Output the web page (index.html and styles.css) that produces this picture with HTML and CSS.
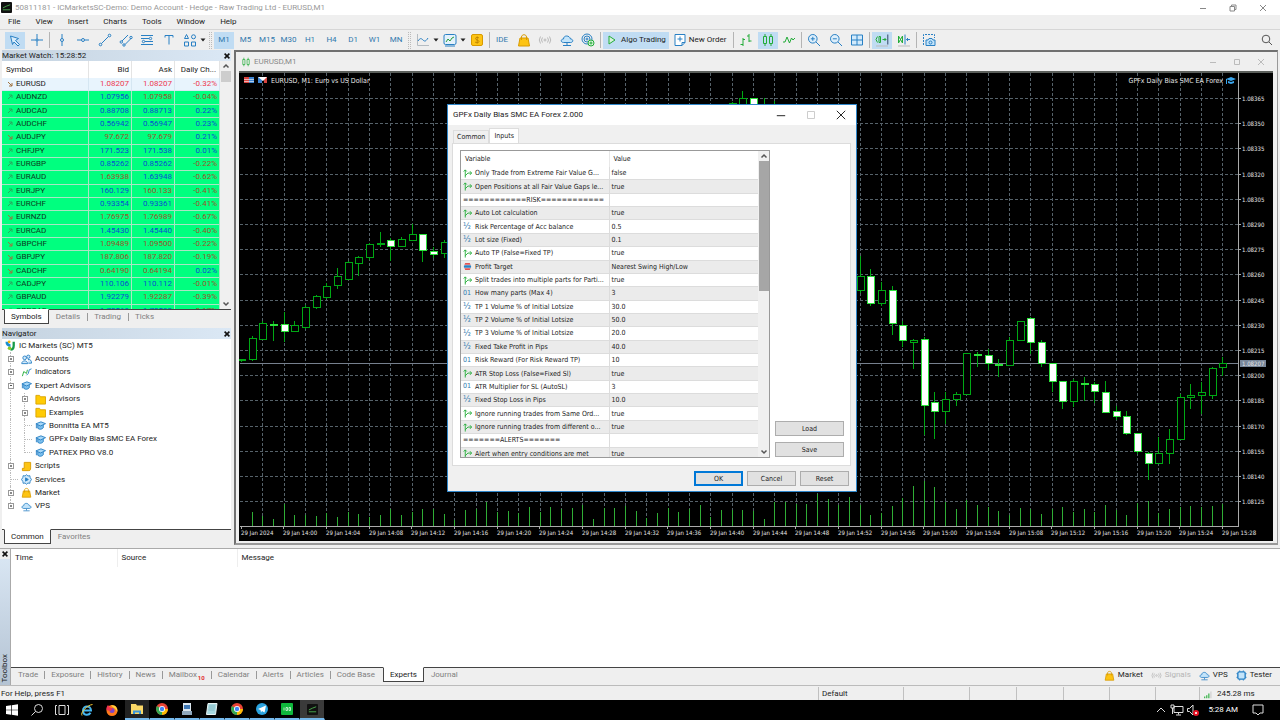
FILE: index.html
```html
<!DOCTYPE html>
<html lang="en">
<head>
<meta charset="utf-8">
<title>50811181 - ICMarketsSC-Demo: Demo Account - Hedge - Raw Trading Ltd - EURUSD,M1</title>
<link rel="stylesheet" href="styles.css">
</head>
<body>
<svg class="sprite" aria-hidden="true">
  <symbol id="i-pointer" viewBox="0 0 14 14"><path d="M2.500 3l8 2.500-3 2 4 4-1.500 1.500-4-4-1.500 2.500z" fill="#d9ecfa"/></symbol>
  <symbol id="i-cross" viewBox="0 0 14 14"><path d="M7 1v12M1 7h12"/><circle cx="7" cy="7" r="1" fill="#efefef"/></symbol>
  <symbol id="i-vline" viewBox="0 0 14 14"><path d="M7 1v4.500M7 8.500v4.500"/><circle cx="7" cy="7" r="1.500"/></symbol>
  <symbol id="i-hline" viewBox="0 0 14 14"><path d="M1 7h4.500M8.500 7h4.500"/><circle cx="7" cy="7" r="1.500"/></symbol>
  <symbol id="i-trend" viewBox="0 0 14 14"><path d="M3.500 10.500l7-7"/><circle cx="2.500" cy="11.500" r="1.300"/><circle cx="11.500" cy="2.500" r="1.300"/></symbol>
  <symbol id="i-channel" viewBox="0 0 14 14"><path d="M3 8l6-6M6 11.500l6-6"/><circle cx="2.300" cy="9" r="1.200"/><circle cx="5" cy="12" r="1.200"/><circle cx="12" cy="4.500" r="1.200"/></symbol>
  <symbol id="i-fib" viewBox="0 0 14 14"><path d="M1 2.500h12M1 5.500h8M5 8.500h8M1 11.500h12"/><circle cx="10.500" cy="5.500" r="1.200"/><circle cx="3.500" cy="8.500" r="1.200"/></symbol>
  <symbol id="i-text" viewBox="0 0 14 14"><path d="M3 4.500v-2h8v2M7 2.500v9"/></symbol>
  <symbol id="i-shapes" viewBox="0 0 14 14"><path d="M3.500 1.500l2 4h-4zM8.500 9h4v4h-4zM1.500 9h4v4h-4z"/><circle cx="10.500" cy="3.800" r="2"/></symbol>
  <symbol id="i-caret" viewBox="0 0 6 6"><path d="M.5 1.500h5L3 4.500z" fill="#222" stroke="none"/></symbol>
  <symbol id="i-linechart" viewBox="0 0 14 14"><path d="M1.500 1v11.500H13" stroke="#b5bcc2"/><path d="M2 8c2-3 3-3 5-1s3 1 5-2"/></symbol>
  <symbol id="i-indic" viewBox="0 0 14 14"><rect x="1" y="1.500" width="12" height="10" rx="1.500" fill="#e3f1fb"/><path d="M3 9l2-3 2 2 2-3 2-1" stroke="#2a9b3c"/><path d="M2 13h10"/></symbol>
  <symbol id="i-dollar" viewBox="0 0 14 14"><rect x="1.500" y="1.500" width="11" height="11" rx="1.500" fill="#fdc414" stroke="#d89a00"/><path d="M9 5C8 4 5.500 4 5.500 5.600S9 7 9 8.500 6 10 5 9M7.200 3.500v7" stroke="#b57b00" stroke-width=".8"/></symbol>
  <symbol id="i-bag" viewBox="0 0 14 14"><path d="M3 5h8l1.500 8h-11z" fill="#fdc414" stroke="#d89a00"/><path d="M4.500 7V4c0-3 5-3 5 0v3" stroke="#d89a00"/></symbol>
  <symbol id="i-signal" viewBox="0 0 14 14"><g stroke="#b9b9b9"><circle cx="7" cy="7" r="1"/><path d="M4.500 4.500q-2 2.500 0 5M9.500 4.500q2 2.500 0 5M2.500 3.500q-2.500 3.500 0 7M11.500 3.500q2.500 3.500 0 7"/></g></symbol>
  <symbol id="i-cloud" viewBox="0 0 14 14"><path d="M3.500 9.500C.5 9.500.5 6 3.500 6c0-4 6-4 7 0 3 0 3 3.500 0 3.500z" fill="#c3e4fa"/><path d="M7 10v2M3 12.500h8"/></symbol>
  <symbol id="i-radar" viewBox="0 0 14 14"><circle cx="6" cy="6" r="5"/><circle cx="6" cy="6" r="3"/><circle cx="6" cy="6" r="1"/><circle cx="10" cy="10" r="3" fill="#dff5e0" stroke="#22ac38"/><path d="M10 8.500v3M8.500 10h3" stroke="#22ac38"/></symbol>
  <symbol id="i-play" viewBox="0 0 14 14"><path d="M4 3l6 4-6 4z" fill="#d7f1dc" stroke="#22ac38"/></symbol>
  <symbol id="i-order" viewBox="0 0 14 14"><path d="M2 1.500h10v8l-3 3H2z" fill="#fff"/><path d="M12 9.500H9v3M4.500 6h5M7 3.500v5"/></symbol>
  <symbol id="i-bars" viewBox="0 0 14 14"><path d="M4 5v8M1.500 11.500H4M4 6.500h2M10 1v8M8 3h2M10 8h2.500" stroke="#22ac38"/></symbol>
  <symbol id="i-candles" viewBox="0 0 14 14"><path d="M2.500 3.500h3v7h-3zM8.500 3.500h3v7h-3zM4 1v2.500M4 10.500V13M10 1v2.500M10 10.500V13" stroke="#22ac38"/></symbol>
  <symbol id="i-wave" viewBox="0 0 14 14"><path d="M1 9h2l2-5 2.500 6 2-5 1.500 2 2-2" stroke="#22ac38"/></symbol>
  <symbol id="i-zoomin" viewBox="0 0 14 14"><circle cx="5.800" cy="5.800" r="4.300" fill="#dceefb"/><path d="M9 9l4 4M3.800 5.800h4M5.800 3.800v4"/></symbol>
  <symbol id="i-zoomout" viewBox="0 0 14 14"><circle cx="5.800" cy="5.800" r="4.300" fill="#dceefb"/><path d="M9 9l4 4M3.800 5.800h4"/></symbol>
  <symbol id="i-tile" viewBox="0 0 14 14"><path d="M1.500 2h11v10h-11zM7 2v10M1.500 7h11" fill="#d2eafb"/></symbol>
  <symbol id="i-scroll" viewBox="0 0 14 14"><path d="M2.500 3.500L1 6.500l1.500 3M4 3.500h1.500v6H4zM7.500 6.500H11M9.500 5L11 6.500 9.500 8" stroke="#22ac38"/><path d="M12.800 1.500v10" stroke="#346"/><path d="M1 13h12" stroke="#bbb"/></symbol>
  <symbol id="i-shift" viewBox="0 0 14 14"><path d="M1.500 3l4 7M5.500 3l-4 7M1.500 3v7M5.500 3v7" stroke="#22ac38"/><path d="M8 1.500v10M13 6.500h-3.500M11 5L9.500 6.500 11 8"/><path d="M1 13h12" stroke="#bbb"/></symbol>
  <symbol id="i-camera" viewBox="0 0 14 14"><path d="M1.500 12V1.500h11V5" stroke-dasharray="2 1"/><path d="M4 7h2l1-1.500h3L11 7h2v5.500H4z" fill="#c3e4fa"/><circle cx="8.500" cy="9.500" r="1.500"/></symbol>
  <symbol id="i-search" viewBox="0 0 14 14"><circle cx="6" cy="6" r="3.800" stroke="#555"/><path d="M9 9l3 3" stroke="#555"/></symbol>
  <symbol id="i-min" viewBox="0 0 10 10"><path d="M2 5.500h6" stroke="currentColor"/></symbol>
  <symbol id="i-max" viewBox="0 0 10 10"><path d="M2.500 2.500h5v5h-5z" stroke="currentColor"/></symbol>
  <symbol id="i-restore" viewBox="0 0 10 10"><path d="M2 3.500h4.500V8H2zM3.500 3.500V2H8v4.500H6.500" stroke="currentColor"/></symbol>
  <symbol id="i-x" viewBox="0 0 10 10"><path d="M2 2l6 6M8 2l-6 6" stroke="currentColor"/></symbol>
  <symbol id="i-up" viewBox="0 0 10 10"><path d="M2.500 6.500L5 4l2.500 2.500" stroke="#555" stroke-width="1.500"/></symbol>
  <symbol id="i-down" viewBox="0 0 10 10"><path d="M2.500 3.500L5 6l2.500-2.500" stroke="#555" stroke-width="1.500"/></symbol>
  <symbol id="i-logo" viewBox="0 0 12 12"><rect width="12" height="12" rx="1" fill="#111" stroke="none"/><path d="M2 6.500l4-2 4-1.500M2 8.500h8" stroke="#4caf50"/></symbol>
  <symbol id="i-ic" viewBox="0 0 12 12"><path d="M2 2c0 3 1 4 4 4" stroke="#1b8fd0" stroke-width="3"/><circle cx="4.500" cy="2" r="1.500" fill="#f5b400" stroke="none"/><path d="M9.500 2v4c0 3-1 4.500-3.500 4.500" stroke="#159a48" stroke-width="2.500"/><circle cx="5" cy="9" r="2" fill="#8ac926" stroke="none"/></symbol>
  <symbol id="i-people" viewBox="0 0 12 12"><circle cx="4" cy="4.200" r="2" fill="#d2eafb"/><path d="M.8 10.500c0-4 6.400-4 6.400 0z" fill="#d2eafb"/><circle cx="8" cy="3" r="1.800" fill="#d2eafb"/><path d="M7.500 6c3-.5 4 1.500 4 4H8" fill="#d2eafb"/></symbol>
  <symbol id="i-fx" viewBox="0 0 12 12"><path d="M1.500 10L3 5l3 2 1-4" stroke="#22ac38"/><path d="M6 9l2-2 1-4 2.500-1"/></symbol>
  <symbol id="i-cap" viewBox="0 0 12 12"><path d="M3 5v4c2 2 5 1 6-.5V5" fill="#7cc0ee"/><path d="M1 4.200L6.500 2 11.500 4 6 6.500z" fill="#a9d8f7"/><path d="M1.500 4.500V9"/></symbol>
  <symbol id="i-folder" viewBox="0 0 12 12"><path d="M1 1.500h4l1 1.500h5.500v8H1z" fill="#ffcb05" stroke="#dba400"/></symbol>
  <symbol id="i-script" viewBox="0 0 12 12"><path d="M3.500 1.500h7v6c0 3-1 3-2.500 3H1.500V8h2z" fill="#fdc414" stroke="#d89a00"/></symbol>
  <symbol id="i-gear" viewBox="0 0 12 12"><path d="M6 .8l1.600 1.400 2-.4.400 2L11.400 6 10 8.200l-.4 2-2-.4L6 11.200 4.400 9.800l-2 .4-.4-2L.6 6 2 3.800l.4-2 2 .4z" fill="#d2eafb"/><path d="M5 4.200v3.600L8 6z" fill="#2980c4"/></symbol>
  <symbol id="i-chip" viewBox="0 0 12 12"><rect x="2" y="2" width="8" height="8" rx="1.500" fill="#c3e4fa" stroke-width="1.500"/><path d="M4 .5v1.500M8 .5v1.500M4 10v1.500M8 10v1.500M.5 4H2M.5 8H2M10 4h1.500M10 8h1.500"/></symbol>
  <symbol id="i-bool" viewBox="0 0 10 10"><path d="M2.500 9.500V1M.8 2.800L2.500 1l1.700 1.800M2.500 7.500L5.500 4.500h4M7.800 2.500L9.500 4.500 7.800 6.500" stroke="#22ac38"/></symbol>
  <symbol id="i-enum" viewBox="0 0 10 10"><path d="M2.500 1h5l1 2h-7z" fill="#e05252" stroke="none"/><rect x="1" y="3.500" width="8" height="3" rx="1" fill="#2980c4" stroke="none"/><path d="M1.500 7h7l-1 2h-5z" fill="#e05252" stroke="none"/></symbol>
  <symbol id="i-conn" viewBox="0 0 12 12"><path d="M2 11V9M4.500 11V7.500M7 11V5.500" stroke="#3eb64f" stroke-width="1.500"/><path d="M9.500 11V3" stroke="#d0d0d0" stroke-width="1.500"/></symbol>
  <symbol id="i-win" viewBox="0 0 14 14"><path d="M1 3l5-.7v4.400H1zM6.700 2.200L13 1.300v5.400H6.700zM1 7.300h5v4.400L1 11zM6.700 7.300H13v5.400l-6.300-.9z" fill="#fff" stroke="none"/></symbol>
  <symbol id="i-find" viewBox="0 0 14 14"><circle cx="8.500" cy="5.500" r="4" stroke="#ddd"/><path d="M5.500 8.500L1.500 12.500" stroke="#ddd"/></symbol>
  <symbol id="i-taskview" viewBox="0 0 14 14"><path d="M4 2.500h6v9H4zM2 2.500H.5v9H2M12 2.500h1.500v9H12" stroke="#ddd"/></symbol>
  <symbol id="i-ie" viewBox="0 0 14 14"><path d="M3 7.500h8C11 2 3 2 3 7.500s6 5 7.500 2.300" stroke="#45b5ee" stroke-width="2"/><path d="M2 12.500C0 10 7 2 12.500 1.500" stroke="#f3c634"/></symbol>
  <symbol id="i-fox" viewBox="0 0 14 14"><circle cx="7" cy="7.500" r="5.500" fill="#ff7a1a" stroke="none"/><path d="M6 2.500C10 1 13 5 12.300 9 11 6 9 5 6 2.500z" fill="#ffd23c" stroke="none"/><circle cx="7" cy="7.500" r="2.500" fill="#7b45c9" stroke="none"/><path d="M1.500 7C1 5 2 3 3 2l1.500 2L8 6 5 8z" fill="#f0334f" stroke="none"/></symbol>
  <symbol id="i-explorer" viewBox="0 0 14 14"><path d="M1 2h5l1 1.500h6V12H1z" fill="#fbd867" stroke="none"/><path d="M3 12V8.500h8V12H9V10.500H5V12z" fill="#3b97dc" stroke="none"/></symbol>
  <symbol id="i-chrome" viewBox="0 0 14 14"><circle cx="7" cy="7" r="6" fill="#e94335" stroke="none"/><path d="M7 7L1.800 4A6 6 0 0 0 7 13z" fill="#34a853" stroke="none"/><path d="M7 7h6a6 6 0 0 1-6 6z" fill="#fbbc05" stroke="none"/><circle cx="7" cy="7" r="3" fill="#fff" stroke="none"/><circle cx="7" cy="7" r="2.200" fill="#4285f4" stroke="none"/></symbol>
  <symbol id="i-server" viewBox="0 0 14 14"><path d="M3 1h8v12H3z" fill="#dce7ef" stroke="none"/><path d="M4 3h6v4H4z" fill="#3f78b5" stroke="none"/><path d="M2 9h10v4H2z" fill="#8fa8bd" stroke="none"/></symbol>
  <symbol id="i-notepad" viewBox="0 0 14 14"><path d="M3 1.500h9l-1.500 11H1.500z" fill="#a8d8df" stroke="#e9f3f3"/><path d="M4 4h6M4 6h6M3.500 8h6" stroke="#6fa9b5" stroke-width=".6"/></symbol>
  <symbol id="i-telegram" viewBox="0 0 14 14"><circle cx="7" cy="7" r="6" fill="#2aa3df" stroke="none"/><path d="M3 7l8-3.500L9.500 10.500 7 9 6 10.500 5.500 8z" fill="#fff" stroke="none"/></symbol>
  <symbol id="i-green" viewBox="0 0 14 14"><rect x="1" y="1" width="12" height="12" rx="1" fill="#0fb83c" stroke="none"/><path d="M4 5.500v3M6 5.500h1.500v3H6zM9 5.500h1.500v3H9z" stroke="#d5f8dd" stroke-width=".8"/></symbol>
  <symbol id="i-net" viewBox="0 0 14 14"><path d="M4 3.500h9v6H4zM8.500 9.500v2M6 12h5M1 2h3v3H1zM2.500 5v6" stroke="#ddd"/></symbol>
  <symbol id="i-mute" viewBox="0 0 14 14"><path d="M1.500 5.500h2L7 2v10L3.500 8.500h-2z" stroke="#ddd"/><circle cx="10" cy="10" r="3" fill="#e81123" stroke="none"/><path d="M9 9l2 2M11 9l-2 2" stroke="#fff" stroke-width=".8"/></symbol>
  <symbol id="i-note" viewBox="0 0 14 14"><path d="M2 2h10v8H9l-2 2-2-2H2z" stroke="#ddd"/></symbol>
  <symbol id="i-chev" viewBox="0 0 14 14"><path d="M3 9l4-4 4 4" stroke="#ddd"/></symbol>
</svg>

<header class="titlebar">
  <svg class="ic logo"><use href="#i-logo"/></svg>
  <span class="window-title">50811181 - ICMarketsSC-Demo: Demo Account - Hedge - Raw Trading Ltd - EURUSD,M1</span>
  <span class="win-buttons">
    <button aria-label="Minimize"><svg class="ic s"><use href="#i-min"/></svg></button>
    <button aria-label="Restore"><svg class="ic s"><use href="#i-restore"/></svg></button>
    <button aria-label="Close"><svg class="ic s"><use href="#i-x"/></svg></button>
  </span>
</header>

<nav class="menubar">
  <button>File</button><button>View</button><button>Insert</button><button>Charts</button><button>Tools</button><button>Window</button><button>Help</button>
</nav>

<div class="toolbar">
  <div class="group g2">
    <button class="tb on" aria-label="Cursor"><svg class="ic"><use href="#i-pointer"/></svg></button>
    <button class="tb" aria-label="Crosshair"><svg class="ic"><use href="#i-cross"/></svg></button>
  </div>
  <i class="sep"></i>
  <div class="group g7">
    <button class="tb" aria-label="Vertical line"><svg class="ic"><use href="#i-vline"/></svg></button>
    <button class="tb" aria-label="Horizontal line"><svg class="ic"><use href="#i-hline"/></svg></button>
    <button class="tb" aria-label="Trendline"><svg class="ic"><use href="#i-trend"/></svg></button>
    <button class="tb" aria-label="Channel"><svg class="ic"><use href="#i-channel"/></svg></button>
    <button class="tb" aria-label="Fibonacci"><svg class="ic"><use href="#i-fib"/></svg></button>
    <button class="tb" aria-label="Text"><svg class="ic"><use href="#i-text"/></svg></button>
    <button class="tb" aria-label="Shapes"><svg class="ic"><use href="#i-shapes"/></svg></button>
  </div>
  <button class="drop" aria-label="More shapes"><svg class="ic"><use href="#i-caret"/></svg></button>
  <i class="grip"></i>
  <div class="group g9">
    <button class="tb on">M1</button><button class="tb">M5</button><button class="tb">M15</button><button class="tb">M30</button><button class="tb">H1</button><button class="tb">H4</button><button class="tb">D1</button><button class="tb">W1</button><button class="tb">MN</button>
  </div>
  <i class="grip"></i>
  <button class="tb" aria-label="Chart type"><svg class="ic"><use href="#i-linechart"/></svg></button>
  <button class="drop" aria-label="Chart types"><svg class="ic"><use href="#i-caret"/></svg></button>
  <button class="tb" aria-label="Indicators"><svg class="ic"><use href="#i-indic"/></svg></button>
  <button class="drop" aria-label="Indicator list"><svg class="ic"><use href="#i-caret"/></svg></button>
  <button class="tb" aria-label="Trade"><svg class="ic"><use href="#i-dollar"/></svg></button>
  <i class="sep"></i>
  <div class="group g5">
    <button class="tb">IDE</button>
    <button class="tb" aria-label="Market"><svg class="ic"><use href="#i-bag"/></svg></button>
    <button class="tb" aria-label="Signals"><svg class="ic"><use href="#i-signal"/></svg></button>
    <button class="tb" aria-label="VPS"><svg class="ic"><use href="#i-cloud"/></svg></button>
    <button class="tb" aria-label="Copy"><svg class="ic"><use href="#i-radar"/></svg></button>
  </div>
  <i class="sep"></i>
  <button class="tb wide on"><svg class="ic"><use href="#i-play"/></svg>Algo Trading</button>
  <button class="tb wide"><svg class="ic"><use href="#i-order"/></svg>New Order</button>
  <i class="sep"></i>
  <div class="group g3">
    <button class="tb" aria-label="Bar chart"><svg class="ic"><use href="#i-bars"/></svg></button>
    <button class="tb on" aria-label="Candlesticks"><svg class="ic"><use href="#i-candles"/></svg></button>
    <button class="tb" aria-label="Line chart"><svg class="ic"><use href="#i-wave"/></svg></button>
  </div>
  <i class="sep"></i>
  <div class="group g3">
    <button class="tb" aria-label="Zoom in"><svg class="ic"><use href="#i-zoomin"/></svg></button>
    <button class="tb" aria-label="Zoom out"><svg class="ic"><use href="#i-zoomout"/></svg></button>
    <button class="tb" aria-label="Tile windows"><svg class="ic"><use href="#i-tile"/></svg></button>
  </div>
  <i class="sep"></i>
  <div class="group g2">
    <button class="tb on" aria-label="Auto scroll"><svg class="ic"><use href="#i-scroll"/></svg></button>
    <button class="tb" aria-label="Chart shift"><svg class="ic"><use href="#i-shift"/></svg></button>
  </div>
  <i class="sep"></i>
  <button class="tb" aria-label="Screenshot"><svg class="ic"><use href="#i-camera"/></svg></button>
  <button class="tb find" aria-label="Search"><svg class="ic"><use href="#i-search"/></svg></button>
</div>

<main class="workspace">
  <aside class="side">
    <section class="panel market">
      <h2 class="panel-title">Market Watch: 15:28:52<button aria-label="Close Market Watch"><svg class="ic x"><use href="#i-x"/></svg></button></h2>
      <div class="scroll-area">
        <div class="clip">
          <table class="quotes">
            <colgroup><col><col class="c-bid"><col class="c-ask"><col class="c-day"></colgroup>
            <thead><tr><th>Symbol</th><th>Bid</th><th>Ask</th><th>Daily Ch...</th></tr></thead>
            <tbody id="quotes"></tbody>
          </table>
        </div>
        <div class="scrollbar"><svg class="ic s"><use href="#i-up"/></svg><i class="thumb short"></i><svg class="ic s"><use href="#i-down"/></svg></div>
      </div>
      <div class="tabs"><button class="sel">Symbols</button><button>Details</button><button>Trading</button><button>Ticks</button></div>
    </section>
    <section class="panel navigator">
      <h2 class="panel-title">Navigator<button aria-label="Close Navigator"><svg class="ic x"><use href="#i-x"/></svg></button></h2>
      <div class="tree-box">
        <ul class="tree">
          <li class="root"><svg class="ic t"><use href="#i-ic"/></svg>IC Markets (SC) MT5</li>
          <li class="l1"><button class="exp plus" aria-label="Expand Accounts"></button><svg class="ic t"><use href="#i-people"/></svg>Accounts</li>
          <li class="l1"><button class="exp plus" aria-label="Expand Indicators"></button><svg class="ic t"><use href="#i-fx"/></svg>Indicators</li>
          <li class="l1"><button class="exp" aria-label="Collapse Expert Advisors"></button><svg class="ic t"><use href="#i-cap"/></svg>Expert Advisors</li>
          <li class="l2"><button class="exp plus" aria-label="Expand Advisors"></button><svg class="ic t"><use href="#i-folder"/></svg>Advisors</li>
          <li class="l2"><button class="exp plus" aria-label="Expand Examples"></button><svg class="ic t"><use href="#i-folder"/></svg>Examples</li>
          <li class="l2"><i class="dash"></i><svg class="ic t"><use href="#i-cap"/></svg>Bonnitta EA MT5</li>
          <li class="l2"><i class="dash"></i><svg class="ic t"><use href="#i-cap"/></svg>GPFx Daily Bias SMC EA Forex</li>
          <li class="l2 last"><i class="dash"></i><svg class="ic t"><use href="#i-cap"/></svg>PATREX PRO V8.0</li>
          <li class="l1"><button class="exp plus" aria-label="Expand Scripts"></button><svg class="ic t"><use href="#i-script"/></svg>Scripts</li>
          <li class="l1"><i class="dash"></i><svg class="ic t"><use href="#i-gear"/></svg>Services</li>
          <li class="l1"><button class="exp plus" aria-label="Expand Market"></button><svg class="ic t"><use href="#i-bag"/></svg>Market</li>
          <li class="l1 last"><button class="exp plus" aria-label="Expand VPS"></button><svg class="ic t"><use href="#i-cloud"/></svg>VPS</li>
        </ul>
      </div>
      <div class="tabs"><button class="sel">Common</button><button>Favorites</button></div>
    </section>
  </aside>

  <section class="chart-window">
    <div class="chart-title">
      <svg class="ic s"><use href="#i-candles"/></svg><span>EURUSD,M1</span>
      <span class="chart-buttons">
        <button aria-label="Minimize chart"><svg class="ic s"><use href="#i-min"/></svg></button>
        <button aria-label="Maximize chart"><svg class="ic s"><use href="#i-max"/></svg></button>
        <button aria-label="Close chart"><svg class="ic s"><use href="#i-x"/></svg></button>
      </span>
    </div>
    <div class="chart-canvas"><svg id="chart" viewBox="239 73 1034 468" preserveAspectRatio="xMinYMin meet"></svg></div>
  </section>
</main>

<section class="toolbox">
  <div class="toolbox-side"><button aria-label="Close Toolbox"><svg class="ic x"><use href="#i-x"/></svg></button><span class="side-label">Toolbox</span></div>
  <div class="toolbox-main">
    <div class="log">
      <table class="log-table"><thead><tr><th class="c-time">Time</th><th class="c-source">Source</th><th>Message</th></tr></thead></table>
    </div>
    <div class="tool-row">
      <div class="tabs bottom">
        <button>Trade</button><button>Exposure</button><button>History</button><button>News</button><button>Mailbox<sub>10</sub></button><button>Calendar</button><button>Alerts</button><button>Articles</button><button>Code Base</button><button class="sel">Experts</button><button>Journal</button>
      </div>
      <div class="services">
        <a href="#"><svg class="ic t"><use href="#i-bag"/></svg>Market</a>
        <a href="#" class="off"><svg class="ic t"><use href="#i-signal"/></svg>Signals</a>
        <a href="#"><svg class="ic t"><use href="#i-cloud"/></svg>VPS</a>
        <a href="#"><svg class="ic t"><use href="#i-chip"/></svg>Tester</a>
      </div>
    </div>
  </div>
</section>

<footer class="status">
  <span>For Help, press F1</span><span>Default</span><span></span><span></span><span></span><span></span><span></span><span></span><span class="ping"><svg class="ic s"><use href="#i-conn"/></svg>245.28 ms</span>
</footer>

<nav class="taskbar">
  <button aria-label="Start"><svg class="ic"><use href="#i-win"/></svg></button>
  <button aria-label="Search Windows"><svg class="ic"><use href="#i-find"/></svg></button>
  <button aria-label="Task view"><svg class="ic"><use href="#i-taskview"/></svg></button>
  <button aria-label="Internet Explorer"><svg class="ic"><use href="#i-ie"/></svg></button>
  <button aria-label="Firefox"><svg class="ic"><use href="#i-fox"/></svg></button>
  <button class="run lit" aria-label="File Explorer"><svg class="ic"><use href="#i-explorer"/></svg></button>
  <button class="run" aria-label="Chrome profile"><svg class="ic"><use href="#i-chrome"/></svg></button>
  <button class="run" aria-label="Server Manager"><svg class="ic"><use href="#i-server"/></svg></button>
  <button class="run" aria-label="Notepad"><svg class="ic"><use href="#i-notepad"/></svg></button>
  <button class="run" aria-label="Chrome"><svg class="ic"><use href="#i-chrome"/></svg></button>
  <button class="run" aria-label="Telegram"><svg class="ic"><use href="#i-telegram"/></svg></button>
  <button class="run" aria-label="Trading terminal"><svg class="ic"><use href="#i-green"/></svg></button>
  <button class="run active" aria-label="MetaTrader 5"><svg class="ic logo"><use href="#i-logo"/></svg></button>
  <div class="tray">
    <button aria-label="Hidden icons"><svg class="ic"><use href="#i-chev"/></svg></button>
    <button aria-label="Network"><svg class="ic"><use href="#i-net"/></svg></button>
    <button aria-label="Volume"><svg class="ic"><use href="#i-mute"/></svg></button>
    <span class="clock">5:28 AM</span>
    <button aria-label="Notifications"><svg class="ic"><use href="#i-note"/></svg></button>
  </div>
</nav>

<div class="dialog" role="dialog" aria-labelledby="dlg-title">
  <div class="dialog-head">
    <span id="dlg-title">GPFx Daily Bias SMC EA Forex 2.000</span>
    <span class="dialog-buttons">
      <button aria-label="Minimize dialog"><svg class="ic"><use href="#i-min"/></svg></button>
      <button class="dim" aria-label="Maximize dialog"><svg class="ic"><use href="#i-max"/></svg></button>
      <button aria-label="Close dialog"><svg class="ic"><use href="#i-x"/></svg></button>
    </span>
  </div>
  <div class="dialog-tabs"><button>Common</button><button class="sel">Inputs</button></div>
  <div class="dialog-page">
    <div class="inputs-box">
      <div class="clip">
        <table class="inputs">
          <colgroup><col class="c-var"><col></colgroup>
          <thead><tr><th>Variable</th><th>Value</th></tr></thead>
          <tbody id="inputs"></tbody>
        </table>
      </div>
      <div class="scrollbar"><svg class="ic s"><use href="#i-up"/></svg><i class="thumb long"></i><svg class="ic s"><use href="#i-down"/></svg></div>
    </div>
    <div class="file-actions"><button class="btn">Load</button><button class="btn">Save</button></div>
  </div>
  <div class="dialog-foot"><button class="btn primary">OK</button><button class="btn">Cancel</button><button class="btn">Reset</button></div>
</div>
<script src="app.js"></script>
</body>
</html>
```

FILE: styles.css
```css
* { box-sizing: border-box; }
body {
  margin: 0;
  height: 100vh;
  display: flex;
  flex-direction: column;
  position: relative;
  overflow: hidden;
  background: #efefef;
  color: #1c1c1c;
  font: 8px/12px Roboto, "Noto Sans", sans-serif;
}
button {
  margin: 0;
  padding: 0;
  border: 0;
  background: none;
  color: inherit;
  font: inherit;
  white-space: nowrap;
}
h2, ul { margin: 0; padding: 0; font: inherit; }
table { border-collapse: collapse; table-layout: fixed; width: 100%; }
th, td { padding: 0; font-weight: 400; text-align: left; white-space: nowrap; overflow: hidden; }
.sprite { position: absolute; width: 0; height: 0; }
.ic { width: 14px; height: 14px; flex: none; display: block; fill: none; stroke: #2980c4; }
.ic.s { width: 10px; height: 10px; }
.ic.t { width: 11px; height: 11px; }
.ic.x { width: 8px; height: 8px; stroke-width: 2; color: #111; }
.ic.logo { width: 11px; height: 11px; }

.titlebar { display: flex; align-items: center; flex: none; height: 15px; padding-left: 1px; gap: 3px; background: #fff; color: #999; }
.window-title { flex: 1; }
.win-buttons { display: flex; gap: 20px; padding-right: 12px; color: #888; }

.menubar { display: flex; flex: none; height: 14px; padding-left: 8px; gap: 15px; }

.toolbar {
  display: flex;
  flex: none;
  align-items: center;
  height: 21px;
  padding: 0 3px 0 5px;
  border-top: 1px solid #d6d6d6;
  color: #2f78ad;
}
.group { display: flex; justify-content: space-between; }
.g2 { width: 42px; }
.g3 { width: 63px; }
.g5 { width: 106px; }
.g7 { width: 148px; }
.g9 { width: 192px; }
.tb { width: 20px; height: 17px; display: flex; align-items: center; justify-content: center; }
.tb.on { background: #c0dcf3; }
.tb.wide { width: auto; padding: 0 3px 0 2px; gap: 2px; color: #1c1c1c; margin-right: 2px; }
.tb.find { margin-left: auto; }
.drop { width: 7px; }
.drop .ic { width: 6px; height: 6px; }
.sep { width: 1px; height: 16px; margin: 0 2px; background: #b4b4b4; }
.grip { width: 3px; height: 17px; margin: 0 2px; border-left: 1px dotted #bbb; border-right: 1px dotted #bbb; }

.workspace { flex: 1; display: flex; min-height: 0; }
.side { width: 234px; padding-left: 2px; display: flex; flex-direction: column; gap: 3px; }
.panel { display: flex; flex-direction: column; margin-right: 3px; }
.market { height: 275px; }
.navigator { flex: 1; }
.panel-title { display: flex; justify-content: space-between; align-items: center; height: 11px; line-height: 11px; background: linear-gradient(90deg, #c5d3e0, #dbe8f5); }
.scroll-area { display: flex; flex: 1; min-height: 0; background: #fff; }
.clip { flex: 1; min-width: 0; overflow: hidden; }
.scrollbar { width: 11px; display: flex; flex-direction: column; align-items: center; background: #f0f0f0; }
.scrollbar .ic:last-child { margin-top: auto; }
.thumb { width: 10px; background: #cdcdcd; }
.thumb.short { height: 11px; }
.thumb.long { height: 130px; background: #a6a6a6; }

.quotes { height: 257px; line-height: 12px; }
.quotes thead tr { height: 17px; }
.quotes th, .quotes td { border-right: 1px solid #e4e4e4; text-align: right; padding-right: 2px; }
.quotes th:first-child { text-align: left; padding-left: 4px; }
.quotes th:last-child { padding-right: 3px; }
.quotes td { border: 1px solid #a9e5c4; border-left: 0; border-top: 0; background: #00ff7f; }
.quotes td:first-child { text-align: left; padding-left: 4px; color: #0b3b1e; }
.quotes tr.now td { background: #e8f4fd; border-color: #d5e6f2; }
.quotes tr.now td:first-child { color: #1c1c1c; }
.quotes .arrow { display: inline-block; width: 10px; height: 8px; fill: none; stroke: #2ca65e; vertical-align: middle; }
.quotes .arrow.dn { stroke: #a0703c; }
.quotes td.up { color: #0a50d0; }
.quotes td.dn { color: #99562a; }
.quotes tr.now td.dn { color: #ee3a50; }
.c-bid, .c-ask { width: 43px; }
.c-day { width: 45px; }

.tabs { display: flex; height: 16px; border-top: 1px solid #444; color: #808080; }
.tabs button { padding: 0 7px; height: 13px; line-height: 13px; position: relative; }
.tabs button + button::before { content: ""; position: absolute; left: 0; top: 3px; height: 8px; border-left: 1px solid #999; }
.tabs button.sel { margin: -1px 0 0 2px; height: 15px; border: 1px solid #444; border-top-color: #fff; background: #fff; color: #1c1c1c; padding: 0 6px; }
.tabs button.sel::before, .tabs button.sel + button::before { display: none; }

.tree-box { flex: 1; background: #fff; }
.tree { list-style: none; display: grid; grid-auto-rows: 1fr; height: 174px; }
.tree li { display: flex; align-items: center; position: relative; gap: 3px; }
.tree .root { padding-left: 3px; }
.tree .l1 { padding-left: 6px; }
.tree .l2 { padding-left: 20px; }
.tree .l1::before, .tree .l2::before { content: ""; position: absolute; left: 8px; top: 0; bottom: 0; border-left: 1px dotted #bbb; }
.tree .l2::after { content: ""; position: absolute; left: 22px; top: 0; bottom: 0; border-left: 1px dotted #bbb; }
.tree .last.l1::before, .tree .last.l2::after { bottom: 6px; }
.exp { width: 6px; height: 6px; margin: 0 4px 0 0; border: 1px solid #999; background: linear-gradient(#555, #555) center / 2px 1px no-repeat #fff; z-index: 1; }
.exp.plus { background: linear-gradient(#888, #888) center / 2px 2px no-repeat #fff; }
.dash { width: 7px; margin: 0 0 0 3px; border-top: 1px dotted #bbb; }

.chart-window { flex: 1; min-width: 0; display: flex; flex-direction: column; border: 2px solid #707070; border-right: 1px solid #999; border-bottom-color: #999; margin-right: 2px; padding: 0 4px 2px 3px; }
.chart-title { display: flex; align-items: center; gap: 3px; height: 19px; padding-left: 2px; color: #8a8a8a; }
.chart-title .ic { stroke-width: 1; }
.chart-buttons { display: flex; gap: 14px; margin-left: auto; padding-right: 7px; color: #bbb; }
.chart-canvas { flex: 1; min-height: 0; background: #000; border-top: 2px solid #5b5f5b; }
#chart { display: block; width: 100%; height: 100%; font: 6px "DejaVu Sans Condensed", "DejaVu Sans", sans-serif; fill: #e6e6e6; }
#chart .grid { stroke: #56626a; stroke-dasharray: 3 2; }
#chart .hollow { fill: #000; stroke: #00a814; }
#chart .solid { fill: #fff; stroke: #2be03a; }
#chart .wick { stroke: #00a814; }
#chart .vol { stroke: #2fae35; }
#chart .axis { stroke: #aaa; }
#chart .last { stroke: #76808e; }
#chart .tag { fill: #78879a; }
#chart .cap { fill: #3ba7ee; }
#chart .red { fill: #d8433f; }
#chart .blue { fill: #3c83d0; }
#chart .name { font-size: 7px; }

.toolbox { display: flex; flex: none; height: 137px; margin-top: 3px; border-top: 1px solid #aaa; }
.toolbox-side { width: 11px; display: flex; flex-direction: column; align-items: center; justify-content: space-between; padding-bottom: 3px; background: linear-gradient(#dbe8f5, #b4c3d3); border-right: 1px solid #aaa; }
.toolbox-side button { background: #efefef; padding: 1px; }
.side-label { writing-mode: vertical-rl; transform: rotate(180deg); line-height: 10px; }
.toolbox-main { flex: 1; display: flex; flex-direction: column; }
.log { flex: 1; background: #fff; }
.log-table th { height: 18px; padding-left: 4px; }
.c-time { width: 106px; border-right: 1px solid #eee; }
.c-source { width: 120px; border-right: 1px solid #eee; }
.tool-row { display: flex; height: 18px; border-top: 1px solid #444; }
.bottom { border-top: 0; }
.bottom button { padding: 0 6px 0 7px; }
.bottom sub { color: #e03030; font-size: 6px; line-height: 6px; font-weight: 700; margin-left: 1px; }
.services { display: flex; align-items: center; gap: 8px; margin-left: auto; padding-right: 8px; height: 14px; }
.services a { display: flex; align-items: center; gap: 3px; color: inherit; text-decoration: none; }
.services .off { color: #b5b5b5; }

.status { display: grid; flex: none; grid-template-columns: 1fr 85px 66px 47px 47px 46px 46px 44px 81px; height: 15px; border-top: 1px solid #bbb; }
.status span { display: flex; align-items: center; margin-top: 1px; padding-left: 3px; border-left: 1px solid #c0c0c0; }
.status span:first-child { border: 0; padding-left: 1px; }
.status .ping { gap: 4px; }

.taskbar { display: flex; flex: none; height: 20px; background: #000; color: #fff; }
.taskbar button { width: 25px; height: 20px; display: flex; align-items: center; justify-content: center; border-right: 1px solid #000; }
.taskbar .run { border-bottom: 2px solid #76b9ed; }
.taskbar .lit { background: #222; }
.taskbar .active { background: #3a3a3a; }
.tray { display: flex; align-items: center; margin-left: auto; padding-right: 14px; }
.tray button { width: 16px; border: 0; }
.clock { margin: 0 12px 0 7px; }

.dialog {
  position: absolute;
  left: 447px;
  top: 104px;
  width: 410px;
  height: 388px;
  display: flex;
  flex-direction: column;
  border: 1px solid #2f86c9;
  background: #f0f0f0;
}
.dialog-head { display: flex; align-items: center; justify-content: space-between; height: 20px; padding: 0 8px 0 5px; background: #fff; }
.dialog-buttons { display: flex; gap: 16px; color: #222; }
.dialog-buttons .ic { stroke-width: .7; }
.dialog-buttons .dim { color: #ccc; }
.dialog-tabs, .dialog-page, .dialog-foot { font: 7px/12px "DejaVu Sans Condensed", "DejaVu Sans", sans-serif; }
.dialog-tabs { display: flex; align-items: flex-end; height: 18px; padding-left: 5px; }
.dialog-tabs button { height: 13px; padding: 0 3px; border: 1px solid #ddd; border-bottom: 0; }
.dialog-tabs .sel { height: 15px; padding: 0 4px; background: #fff; }
.dialog-page { display: flex; gap: 5px; flex: 1; min-height: 0; margin: 0 5px 0 4px; padding: 6px 6px 7px 7px; border: 1px solid #dcdcdc; background: #fff; }
.inputs-box { display: flex; width: 310px; border: 1px solid #999; }
.inputs { height: 310px; }
.inputs thead tr { height: 16px; }
.inputs th { padding-left: 4px; }
.inputs td { border-bottom: 1px solid #dcdcdc; padding-left: 2px; text-overflow: ellipsis; }
.inputs td:first-child { border-right: 1px solid #dcdcdc; padding-right: 2px; }
.inputs th:first-child { border-right: 1px solid #e8e8e8; }
.inputs tbody tr:nth-child(even) td { background: #ebebeb; }
.inputs .kind { display: inline-block; width: 10px; margin-right: 2px; color: #2f78ad; vertical-align: middle; line-height: 9px; }
.inputs .kind .ic { width: 9px; height: 9px; }
.inputs .half { font-size: 9px; }
.c-var { width: 148px; }
.file-actions { display: flex; flex-direction: column; justify-content: flex-end; gap: 6px; flex: 1; padding-bottom: 1px; }
.btn { height: 15px; border: 1px solid #adadad; background: #e1e1e1; }
.dialog-foot { display: flex; justify-content: flex-end; gap: 4px; height: 25px; padding: 5px 7px 0 0; }
.dialog-foot .btn { width: 49px; }
.btn.primary { border: 2px solid #0078d7; line-height: 10px; }
```

FILE: app.js
```js
const quotes = [
  ["EURUSD", "1.08207", "1.08207", "-0.32%", "dddd"],
  ["AUDNZD", "1.07956", "1.07958", "-0.04%", "uudd"],
  ["AUDCAD", "0.88708", "0.88713", "0.22%", "uuuu"],
  ["AUDCHF", "0.56942", "0.56947", "0.23%", "uuuu"],
  ["AUDJPY", "97.672", "97.679", "0.21%", "dddu"],
  ["CHFJPY", "171.523", "171.538", "0.01%", "uuuu"],
  ["EURGBP", "0.85262", "0.85262", "-0.22%", "uuud"],
  ["EURAUD", "1.63938", "1.63948", "-0.62%", "udud"],
  ["EURJPY", "160.129", "160.133", "-0.41%", "uudd"],
  ["EURCHF", "0.93354", "0.93361", "-0.41%", "uuud"],
  ["EURNZD", "1.76975", "1.76989", "-0.67%", "dddd"],
  ["EURCAD", "1.45430", "1.45440", "-0.40%", "uuud"],
  ["GBPCHF", "1.09489", "1.09500", "-0.22%", "dddd"],
  ["GBPJPY", "187.806", "187.820", "-0.19%", "dddd"],
  ["CADCHF", "0.64190", "0.64194", "0.02%", "dddu"],
  ["CADJPY", "110.106", "110.112", "-0.01%", "uuud"],
  ["GBPAUD", "1.92279", "1.92287", "-0.39%", "uudd"],
  ["GBPCAD", "1.70568", "1.70582", "-0.17%", "uuud"]
];
const dir = c => (c === "u" ? "up" : "dn");
document.getElementById("quotes").innerHTML = quotes.map(([s, b, a, d, f], i) => {
  const path = f[0] === "u" ? "M2 6l4-4M3 2h3v3" : "M2 2l4 4M6 3v3H3";
  return `<tr${i ? "" : ' class="now"'}><td><svg class="arrow ${dir(f[0])}" viewBox="0 0 10 8"><path d="${path}"/></svg>${s}</td>` +
    `<td class="${dir(f[1])}">${b}</td><td class="${dir(f[2])}">${a}</td><td class="${dir(f[3])}">${d}</td></tr>`;
}).join("");

const inputs = [
  ["b", "Only Trade from Extreme Fair Value G...", "false"],
  ["b", "Open Positions at all Fair Value Gaps le...", "true"],
  ["", "============RISK============", ""],
  ["b", "Auto Lot calculation", "true"],
  ["h", "Risk Percentage of Acc balance", "0.5"],
  ["h", "Lot size (Fixed)", "0.1"],
  ["b", "Auto TP (False=Fixed TP)", "true"],
  ["e", "Profit Target", "Nearest Swing High/Low"],
  ["b", "Split trades into multiple parts for Parti...", "true"],
  ["i", "How many parts (Max 4)", "3"],
  ["h", "TP 1 Volume % of Initial Lotsize", "30.0"],
  ["h", "TP 2 Volume % of Initial Lotsize", "50.0"],
  ["h", "TP 3 Volume % of Initial Lotsize", "20.0"],
  ["h", "Fixed Take Profit in Pips", "40.0"],
  ["i", "Risk Reward (For Risk Reward TP)", "10"],
  ["b", "ATR Stop Loss (False=Fixed Sl)", "true"],
  ["i", "ATR Multiplier for SL (AutoSL)", "3"],
  ["h", "Fixed Stop Loss in Pips", "10.0"],
  ["b", "Ignore running trades from Same Ord...", "true"],
  ["b", "Ignore running trades from different o...", "true"],
  ["", "=======ALERTS=======", ""],
  ["b", "Alert when entry conditions are met", "true"]
];
const kinds = {
  b: '<svg class="ic"><use href="#i-bool"/></svg>',
  e: '<svg class="ic"><use href="#i-enum"/></svg>',
  h: '<span class="half">½</span>',
  i: "01"
};
document.getElementById("inputs").innerHTML = inputs.map(([k, n, v]) =>
  `<tr><td>${k ? `<span class="kind">${kinds[k]}</span>` : ""}${n}</td><td>${v}</td></tr>`).join("");

/* Candles: index, type (h hollow, s solid), high, open/close top, bottom, low */
const candles = [
  [0, "h", 359, 359, 360, 361], [1, "h", 336, 338, 359, 360], [2, "h", 321, 323, 339, 339], [3, "s", 321, 324, 325, 340],
  [4, "s", 312, 324, 331, 341], [5, "h", 321, 325, 331, 331], [6, "h", 305, 307, 327, 328], [7, "h", 295, 296, 307, 308],
  [8, "h", 283, 286, 297, 298], [9, "h", 268, 276, 285, 288], [10, "h", 261, 262, 279, 279], [11, "h", 256, 257, 263, 275],
  [12, "h", 243, 244, 257, 259], [13, "h", 232, 243, 244, 246], [14, "s", 238, 240, 246, 260], [15, "h", 237, 239, 246, 246],
  [16, "h", 224, 234, 240, 240], [17, "s", 234, 234, 250, 261], [18, "s", 247, 251, 254, 257], [19, "h", 240, 242, 253, 257],
  [46, "h", 102, 103, 110, 120], [47, "h", 91, 98, 104, 110], [48, "s", 98, 98, 110, 120], [49, "h", 98, 106, 115, 120],
  [50, "h", 101, 107, 115, 120], [58, "h", 256, 276, 290, 292], [59, "s", 269, 276, 303, 305], [60, "h", 282, 290, 303, 305],
  [61, "s", 286, 290, 323, 334], [62, "s", 321, 325, 340, 346], [63, "h", 339, 340, 342, 368], [64, "s", 337, 339, 405, 434],
  [65, "s", 392, 402, 411, 438], [66, "h", 392, 399, 411, 423], [67, "h", 392, 394, 399, 405], [68, "h", 353, 353, 394, 394],
  [69, "s", 352, 354, 355, 366], [70, "s", 349, 355, 363, 369], [71, "s", 359, 364, 365, 376], [72, "h", 337, 340, 365, 365],
  [73, "h", 321, 321, 340, 340], [74, "s", 317, 318, 342, 353], [75, "s", 340, 342, 363, 366], [76, "s", 363, 363, 381, 391],
  [77, "s", 381, 381, 401, 408], [78, "h", 379, 381, 401, 406], [79, "s", 377, 383, 384, 400], [80, "s", 382, 384, 391, 402],
  [81, "s", 381, 392, 412, 412], [82, "s", 406, 411, 416, 419], [83, "s", 411, 416, 433, 434], [84, "s", 433, 433, 451, 453],
  [85, "s", 452, 453, 463, 479], [86, "h", 437, 453, 463, 463], [87, "h", 429, 439, 453, 463], [88, "h", 394, 397, 439, 439],
  [89, "h", 384, 395, 397, 408], [90, "h", 382, 392, 395, 413], [91, "h", 367, 368, 395, 398], [92, "h", 357, 363, 367, 375]
];
/* Top of each volume bar, from the second candle on */
const volumes = [
  512, 516, 519, 504, 515, 515, 516, 513, 517, 512, 514, 517, 515, 509, 515, 512, 509, 509, 514, 520,
  510, 509, 502, 512, 511, 513, 507, 512, 507, 509, 508, 505, 519, 508, 508, 506, 511, 518, 513, 508,
  512, 509, 505, 517, 510, 510, 510, 511, 519, 502, 502, 504, 504, 494, 499, 505, 497, 505, 515, 513,
  506, 498, 486, 481, 487, 502, 509, 500, 505, 507, 511, 515, 508, 509, 514, 509, 507, 512, 509, 512,
  505, 510, 515, 503, 501, 513, 509, 507, 506, 507, 506, 504
];
const px = i => Math.round(241 + i * 32 / 3) + 0.5;
const line = (cls, x1, y1, x2, y2) => `<line class="${cls}" x1="${x1}" y1="${y1}" x2="${x2}" y2="${y2}"/>`;
let out = "";
for (let i = 2; i <= 92; i += 2) out += line("grid", px(i), 73, px(i), 526);
for (let i = 0; i <= 16; i++) {
  const y = Math.round(98 + i * 25.2) + 0.5;
  out += line("grid", 240, y, 1238, y) + line("axis", 1238, y, 1241, y);
  out += `<text x="1242" y="${y + 2}">${(1.08365 - i * 0.00015).toFixed(5)}</text>`;
}
out += line("last", 240, 363.5, 1238, 363.5);
volumes.forEach((y, i) => { out += line("vol", px(i + 1), y, px(i + 1), 526); });
candles.forEach(([i, t, hi, top, bot, lo]) => {
  out += line("wick", px(i), hi, px(i), lo + 1);
  out += `<rect class="${t === "s" ? "solid" : "hollow"}" x="${px(i) - 3}" y="${top + 0.5}" width="7" height="${bot - top}"/>`;
});
out += line("axis", 1238.5, 73, 1238.5, 527) + line("axis", 240, 526.5, 1239, 526.5);
out += '<rect class="tag" x="1240" y="360" width="26" height="7"/><text x="1242" y="366">1.08207</text>';
for (let k = 0; k <= 23; k++) {
  const m = (k - 1) * 4;
  const label = k ? `${14 + Math.floor(m / 60)}:${String(m % 60).padStart(2, "0")}` : "2024";
  const x = Math.round(240.5 + k * 128 / 3);
  out += line("axis", x + 0.5, 526, x + 0.5, 529) + `<text x="${x}" y="535">29 Jan ${label}</text>`;
}
out += '<rect class="red" x="244" y="77" width="5" height="6"/><rect class="blue" x="249" y="77" width="5" height="6"/>' +
  '<path d="M244 79.500h10M244 81.500h10" stroke="#fff" stroke-width=".6"/>' +
  '<path class="blue" d="M258 77h4v6h-4z"/><path class="red" d="M264 77h3v6h-3z"/><path d="M258 77h9l-4 4z" fill="#fff"/>' +
  '<text class="name" x="271" y="83">EURUSD, M1:  Euro vs US Dollar</text>' +
  '<text class="name" x="1223" y="83" text-anchor="end">GPFx Daily Bias SMC EA Forex</text>' +
  '<path class="cap" d="M1226 79l5-2 5 2-5 2zM1228 81l3 1 3-1v2l-3 1-3-1zM1226 79h1v5h-1z"/>';
document.getElementById("chart").innerHTML = out;
```
